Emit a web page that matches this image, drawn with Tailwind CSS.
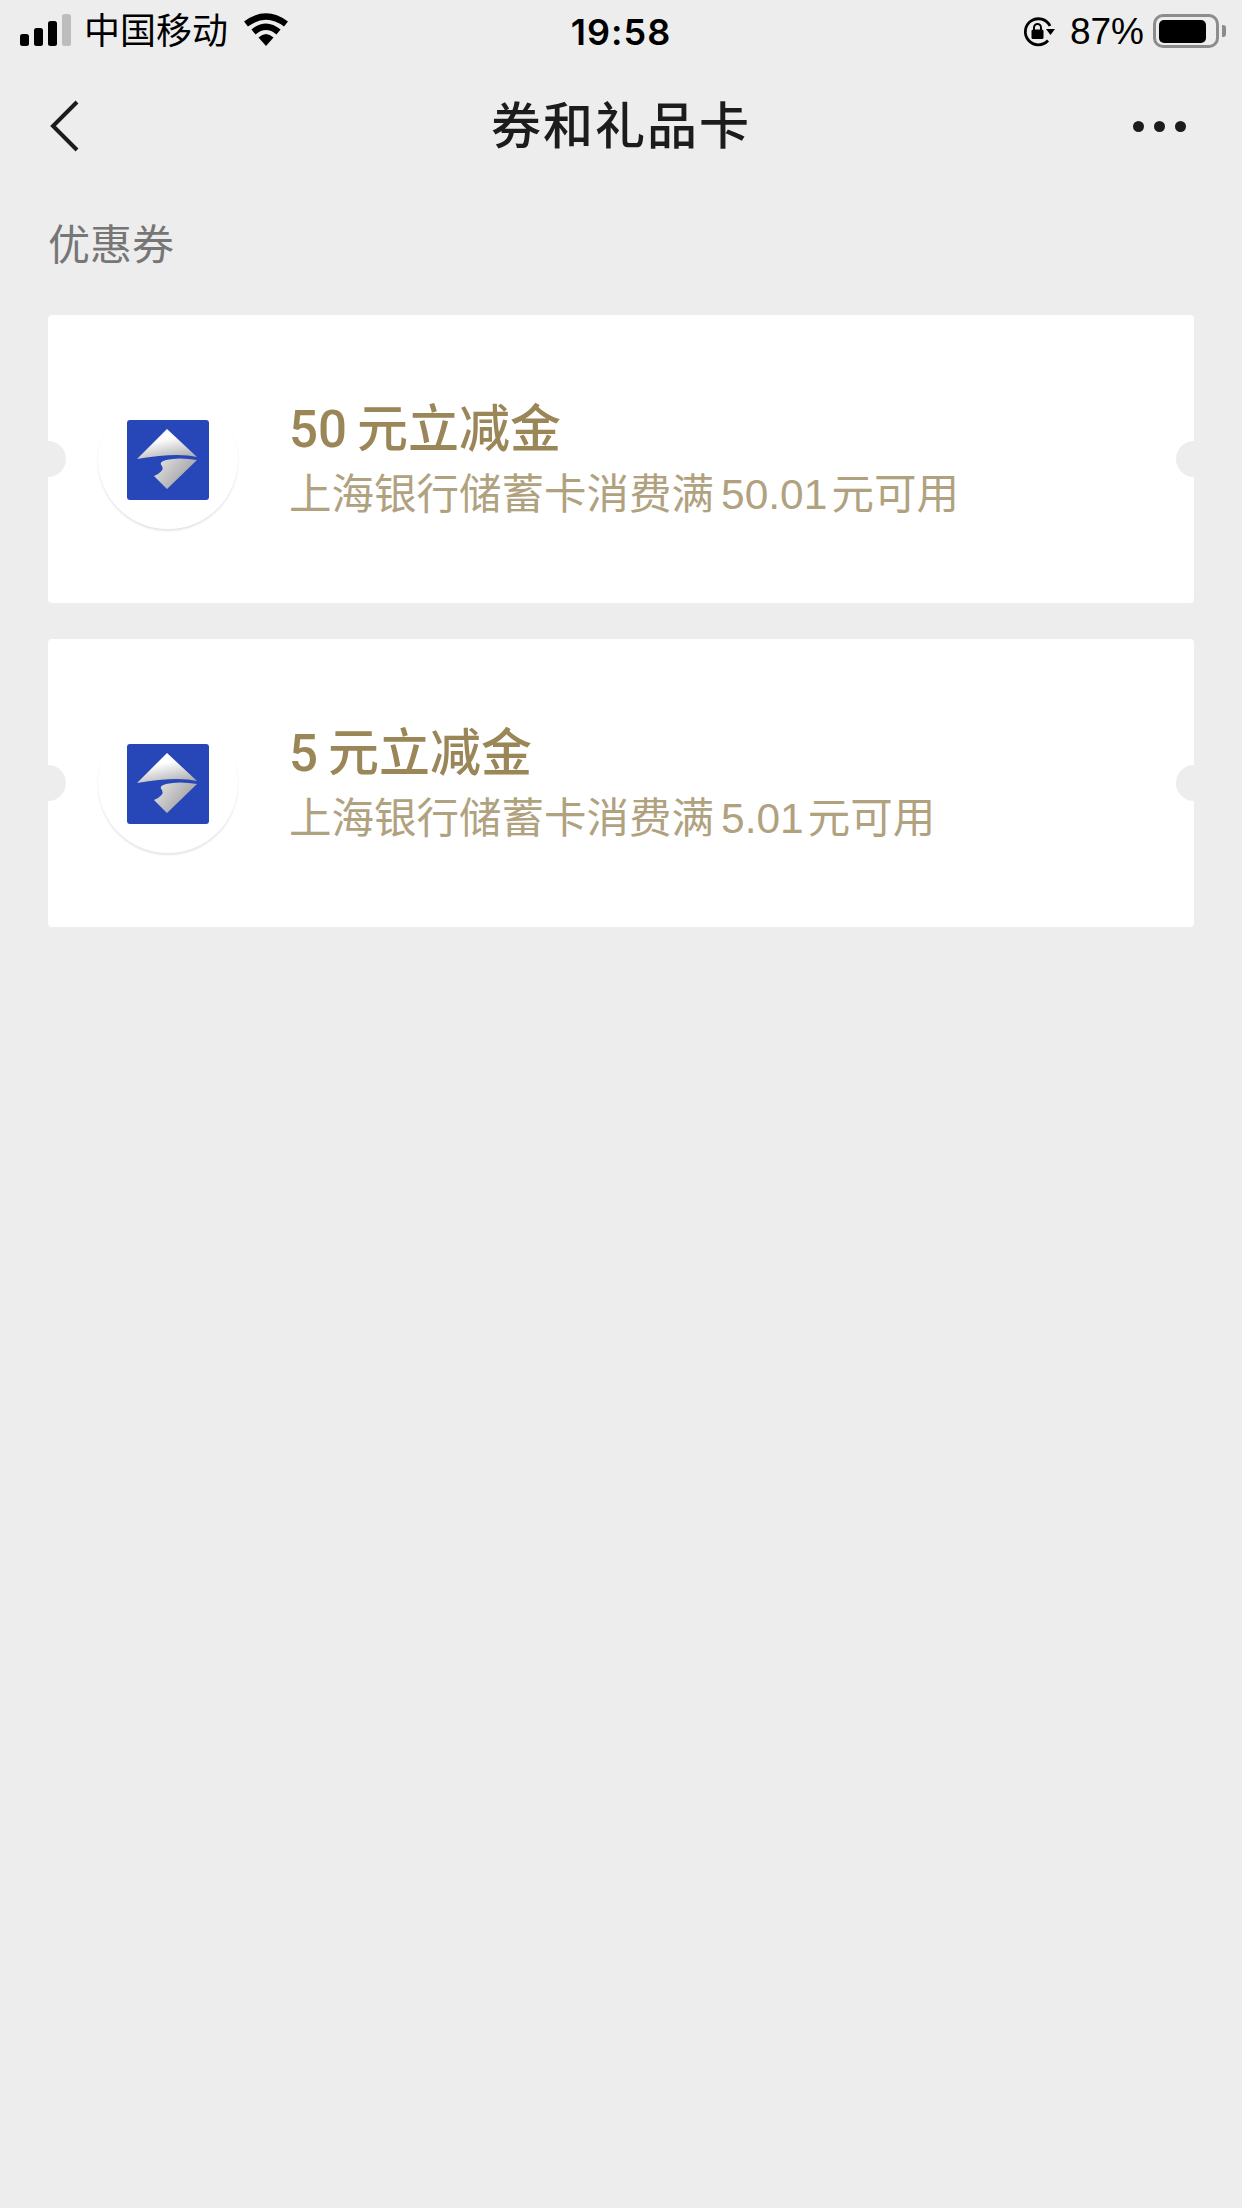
<!DOCTYPE html>
<html lang="zh-CN">
<head>
    <meta charset="UTF-8">
    <meta name="viewport" content="width=device-width, initial-scale=1.0">
    <title>券和礼品卡</title>
    <script src="https://cdn.jsdelivr.net/npm/@tailwindcss/browser@4"></script>
</head>
<body class="bg-[#ededed] font-['Liberation_Sans','Noto_Sans_CJK_SC',sans-serif] w-[1242px] h-[2208px] overflow-hidden">
    <!-- Status bar -->
    <div class="relative h-[60px] pt-[4px] flex items-center justify-between pl-[20px] pr-[16px] text-black">
        <div class="flex items-center">
            <svg width="52" height="34" viewBox="0 0 52 34" class="mt-[-2px]">
                <rect x="0" y="20" width="9" height="12" rx="2.5" fill="#000"/>
                <rect x="14" y="14" width="9" height="18" rx="2.5" fill="#000"/>
                <rect x="28" y="7" width="9" height="25" rx="2.5" fill="#000"/>
                <rect x="42" y="0" width="9" height="32" rx="2.5" fill="#bdbdbd"/>
            </svg>
            <span class="ml-[12px] text-[36px] leading-[44px]">中国移动</span>
            <svg width="46" height="34" viewBox="0 0 46 34" class="ml-[15px] mt-[-4px]">
                <path d="M3 11 Q23 -4 43 11" fill="none" stroke="#000" stroke-width="6.5"/>
                <path d="M10.5 19 Q23 8.500 35.500 19" fill="none" stroke="#000" stroke-width="6.5"/>
                <path d="M15.500 24.500 Q23 17.500 30.500 24.500 L23 33 Z" fill="#000"/>
            </svg>
        </div>
        <span class="absolute left-0 right-0 text-center font-['Inter',sans-serif] text-[36px] font-semibold leading-[44px] tracking-[1px]">19:58</span>
        <div class="flex items-center">
            <svg width="34" height="32" viewBox="0 0 34 32" class="mt-[-1px]">
                <path d="M26 24.500 A13 13 0 1 1 28 10" fill="none" stroke="#000" stroke-width="2.800"/>
                <path d="M24 13 L33 13 L28.500 19 Z" fill="#000"/>
                <rect x="9.500" y="13.500" width="12" height="9.500" rx="1.500" fill="#000"/>
                <path d="M12 14 V11.500 A3.500 3.500 0 0 1 19 11.500 V14" fill="none" stroke="#000" stroke-width="2"/>
            </svg>
            <span class="ml-[14px] text-[37px] leading-[44px]">87%</span>
            <div class="ml-[9px] w-[66px] h-[34px] rounded-[10px] border-[3.500px] border-[#8c8c8c] p-[2.500px] pr-[10px] mt-[-2px]">
                <div class="w-full h-full bg-black rounded-[5px]"></div>
            </div>
            <div class="ml-[3px] w-[4px] h-[12px] bg-[#8c8c8c] rounded-r-[3px] mt-[-2px]"></div>
        </div>
    </div>

    <!-- Nav -->
    <div class="relative h-[132px] flex items-center justify-between pl-[50px] pr-[56px]">
        <svg width="30" height="52" viewBox="0 0 30 52">
            <path d="M27 2 L3 26 L27 50" fill="none" stroke="#1c1c1c" stroke-width="4"/>
        </svg>
        <h1 class="absolute left-0 right-0 text-center text-[50px] font-medium leading-[60px] mt-[2px] text-[#1c1c1c] tracking-[2px]">券和礼品卡</h1>
        <div class="flex gap-[10px]">
            <span class="w-[11px] h-[11px] rounded-full bg-[#1c1c1c]"></span>
            <span class="w-[11px] h-[11px] rounded-full bg-[#1c1c1c]"></span>
            <span class="w-[11px] h-[11px] rounded-full bg-[#1c1c1c]"></span>
        </div>
    </div>

    <!-- Section -->
    <div class="px-[48px] pt-[28px]">
        <h2 class="text-[42px] leading-[52px] text-[#767676] font-normal">优惠券</h2>

        <div class="mt-[43px] flex flex-col gap-[36px] w-[1146px]">
            <!-- Coupon 50 -->
            <div class="relative h-[288px] bg-white rounded-[4px] overflow-hidden flex items-center pl-[50px]">
                <span class="absolute left-[-18px] top-[126px] w-[36px] h-[36px] rounded-full bg-[#ededed]"></span>
                <span class="absolute right-[-18px] top-[126px] w-[36px] h-[36px] rounded-full bg-[#ededed]"></span>
                <div class="w-[140px] h-[140px] rounded-full bg-white shadow-[0_2px_2px_rgba(0,0,0,0.1)] flex items-center justify-center shrink-0">
                    <svg width="82" height="80" viewBox="0 0 82 80" class="blur-[0.5px] mt-[1px]">
                        <defs>
                            <linearGradient id="topA" x1="0.4" y1="0" x2="0.8" y2="1"><stop offset="0.3" stop-color="#ffffff"/><stop offset="1" stop-color="#a9a9ad"/></linearGradient>
                            <linearGradient id="botA" x1="0" y1="0" x2="1" y2="0.6"><stop offset="0" stop-color="#e8e8e8"/><stop offset="1" stop-color="#9a9a9e"/></linearGradient>
                        </defs>
                        <rect width="82" height="80" rx="3" fill="#2747b9"/>
                        <path d="M40 9 L70 37 Q50 32 10 39 Z" fill="url(#topA)"/>
                        <path d="M70 40 L40 69 L27 56 Q38 51 35 46 Q31 42 39 40 Q52 37 70 40 Z" fill="url(#botA)"/>
                    </svg>
                </div>
                <div class="ml-[51px] mt-[4px]">
                    <p class="text-[51px] leading-[60px] font-medium text-[#9b8658] font-['Roboto','Noto_Sans_CJK_SC',sans-serif]">50<span class="ml-[10px]">元立减金</span></p>
                    <p class="text-[42.500px] leading-[54px] text-[#b1a27f] mt-[8px]">上海银行储蓄卡消费满<span class="ml-[7px] mr-[4px]">50.01</span>元可用</p>
                </div>
            </div>

            <!-- Coupon 5 -->
            <div class="relative h-[288px] bg-white rounded-[4px] overflow-hidden flex items-center pl-[50px]">
                <span class="absolute left-[-18px] top-[126px] w-[36px] h-[36px] rounded-full bg-[#ededed]"></span>
                <span class="absolute right-[-18px] top-[126px] w-[36px] h-[36px] rounded-full bg-[#ededed]"></span>
                <div class="w-[140px] h-[140px] rounded-full bg-white shadow-[0_2px_2px_rgba(0,0,0,0.1)] flex items-center justify-center shrink-0">
                    <svg width="82" height="80" viewBox="0 0 82 80" class="blur-[0.5px] mt-[1px]">
                        <defs>
                            <linearGradient id="topB" x1="0.4" y1="0" x2="0.8" y2="1"><stop offset="0.3" stop-color="#ffffff"/><stop offset="1" stop-color="#a9a9ad"/></linearGradient>
                            <linearGradient id="botB" x1="0" y1="0" x2="1" y2="0.6"><stop offset="0" stop-color="#e8e8e8"/><stop offset="1" stop-color="#9a9a9e"/></linearGradient>
                        </defs>
                        <rect width="82" height="80" rx="3" fill="#2747b9"/>
                        <path d="M40 9 L70 37 Q50 32 10 39 Z" fill="url(#topB)"/>
                        <path d="M70 40 L40 69 L27 56 Q38 51 35 46 Q31 42 39 40 Q52 37 70 40 Z" fill="url(#botB)"/>
                    </svg>
                </div>
                <div class="ml-[51px] mt-[4px]">
                    <p class="text-[51px] leading-[60px] font-medium text-[#9b8658] font-['Roboto','Noto_Sans_CJK_SC',sans-serif]">5<span class="ml-[10px]">元立减金</span></p>
                    <p class="text-[42.500px] leading-[54px] text-[#b1a27f] mt-[8px]">上海银行储蓄卡消费满<span class="ml-[7px] mr-[4px]">5.01</span>元可用</p>
                </div>
            </div>
        </div>
    </div>
</body>
</html>
